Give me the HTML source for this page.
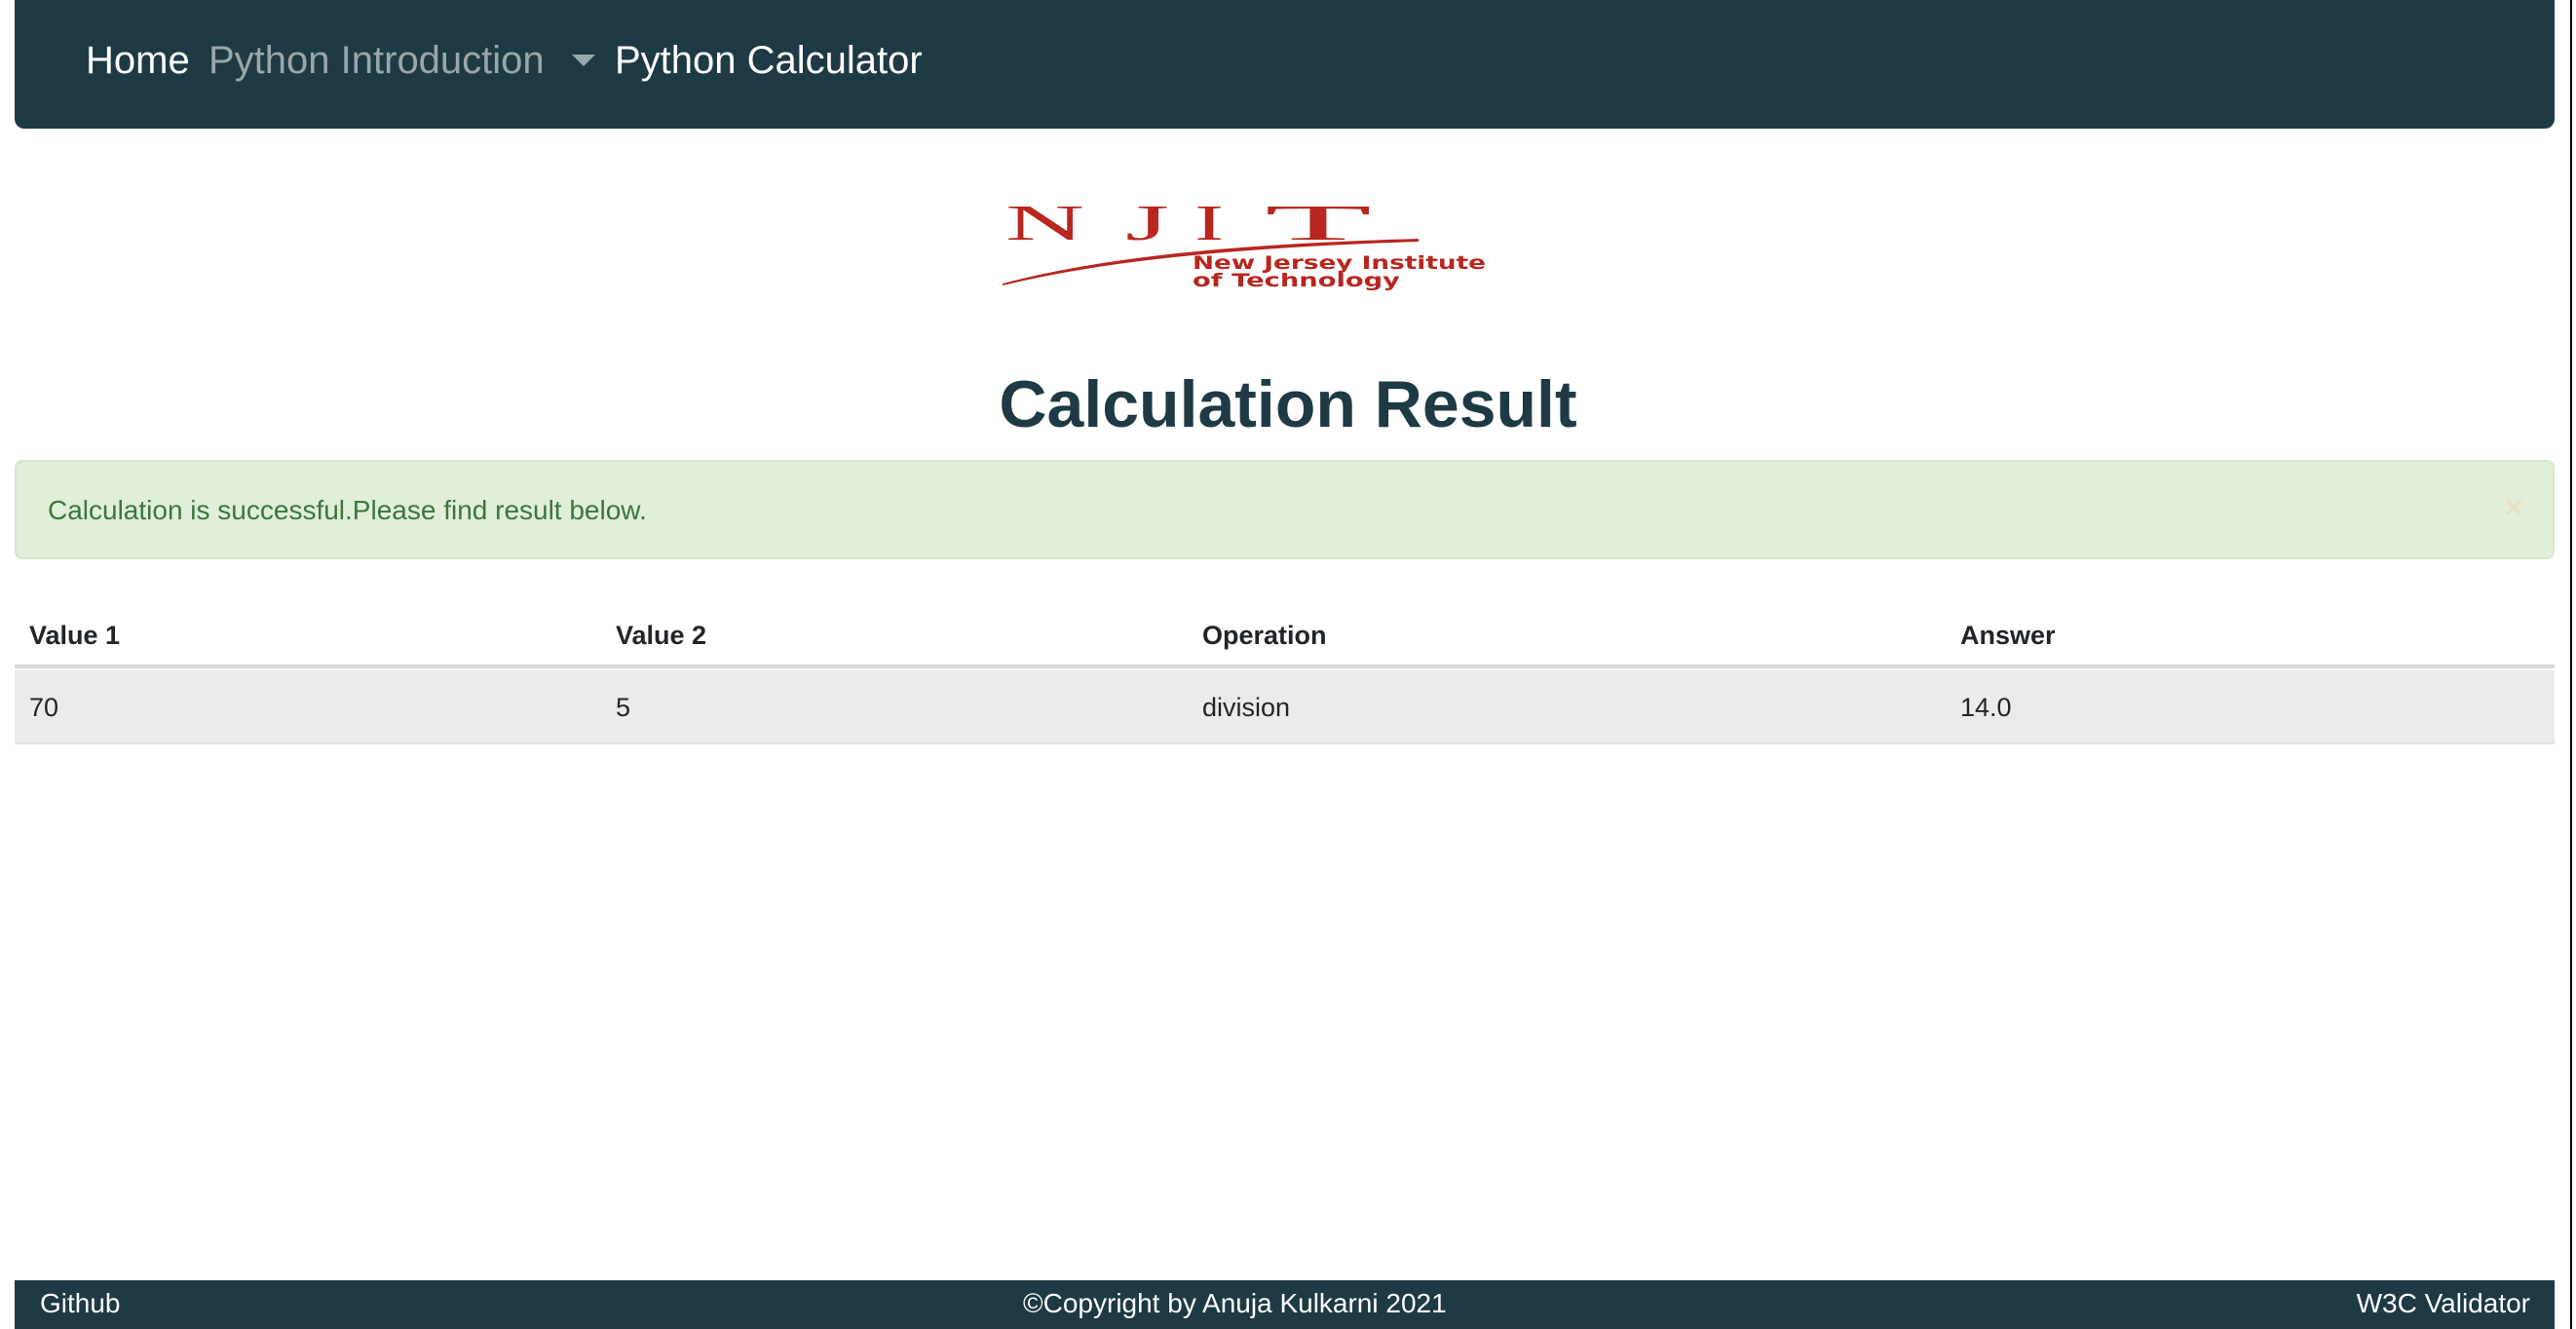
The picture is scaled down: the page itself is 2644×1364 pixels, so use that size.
<!DOCTYPE html>
<html><head><meta charset="utf-8"><style>
*{margin:0;padding:0;box-sizing:border-box}
body{width:2644px;height:1364px;background:#fff;font-family:"Liberation Sans",Arial,sans-serif;position:relative;overflow:hidden}
.nav{position:absolute;left:15px;top:0;width:2607px;height:132px;background:#1e3a44;border-radius:0 0 10px 10px}
.nav span{position:absolute;top:38px;font-size:40px;color:#fff;line-height:48px}
.logo{position:absolute;left:1020px;top:200px}
h1{position:absolute;top:370px;left:0;width:2644px;text-align:center;font-size:68px;font-weight:bold;color:#1e3a44;line-height:90px}
.alert{position:absolute;left:15px;top:472px;width:2607px;height:102px;background:#e1efd9;border:2px solid #d4e8c8;border-radius:8px}
.alert span{position:absolute;left:32px;top:34px;font-size:28px;color:#3c763d}
.alert b{position:absolute;right:30px;top:28px;font-size:34px;color:#e6e2c0;font-weight:bold}
.row{position:absolute;left:15px;width:2607px}
.row span{position:absolute;font-size:27px;color:#212529}
.hd{top:620px;height:66px;border-bottom:4px solid #d9d9d9}
.hd span{font-weight:bold;top:17px}
.bd{top:688px;height:76px;background:#ebebeb;border-bottom:2px solid #dee2e6}
.bd span{top:23px}
.foot{position:absolute;left:15px;top:1314px;width:2607px;height:50px;background:#1e3a44}
.foot span{position:absolute;top:8px;font-size:28px;color:#fff}
</style></head><body>
<div class="nav"><span style="left:73px">Home</span><span style="left:199px;color:#9aa7aa">Python Introduction</span>
<svg style="position:absolute;left:572px;top:56px" width="24" height="14"><polygon points="0,0 24,0 12,12" fill="#9aa7aa"/></svg>
<span style="left:616px">Python Calculator</span></div>
<svg class="logo" width="520" height="110" viewBox="0 0 520 110">
<g font-family="Liberation Serif,serif" font-size="52" fill="#b8261e">
<text x="12" y="46" textLength="81" lengthAdjust="spacingAndGlyphs">N</text>
<text x="135" y="46" textLength="45" lengthAdjust="spacingAndGlyphs">J</text>
<text x="206" y="46" textLength="30" lengthAdjust="spacingAndGlyphs">I</text>
<text x="278" y="46" textLength="110" lengthAdjust="spacingAndGlyphs">T</text>
</g>
<path d="M9 91 C120 62 260 50 436 45 L436 48 C260 54 120 66 9 93Z" fill="#b8261e"/>
<text x="204" y="76" font-size="19" font-weight="bold" fill="#b8261e" font-family="DejaVu Sans,sans-serif" textLength="301" lengthAdjust="spacingAndGlyphs">New Jersey Institute</text>
<text x="204" y="94" font-size="19" font-weight="bold" fill="#b8261e" font-family="DejaVu Sans,sans-serif" textLength="213" lengthAdjust="spacingAndGlyphs">of Technology</text>
</svg>
<h1>Calculation Result</h1>
<div class="alert"><span>Calculation is successful.Please find result below.</span><b>×</b></div>
<div class="row hd"><span style="left:15px">Value 1</span><span style="left:617px">Value 2</span><span style="left:1219px">Operation</span><span style="left:1997px">Answer</span></div>
<div class="row bd"><span style="left:15px">70</span><span style="left:617px">5</span><span style="left:1219px">division</span><span style="left:1997px">14.0</span></div>
<div class="foot"><span style="left:26px">Github</span><span style="left:1035px">©Copyright by Anuja Kulkarni 2021</span><span style="right:25px">W3C Validator</span></div>
<div style="position:absolute;left:2638px;top:0;width:2px;height:1364px;background:#000"></div>
</body></html>
